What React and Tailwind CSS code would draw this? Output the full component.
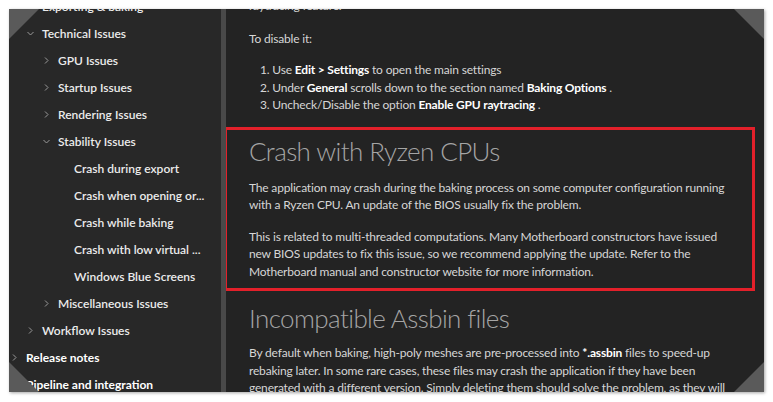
import React from "react";

const navItems = [
  { label: "Exporting & baking", level: 1, icon: "right" },
  { label: "Technical Issues", level: 1, icon: "down" },
  { label: "GPU Issues", level: 2, icon: "right" },
  { label: "Startup Issues", level: 2, icon: "right" },
  { label: "Rendering Issues", level: 2, icon: "right" },
  { label: "Stability Issues", level: 2, icon: "down" },
  { label: "Crash during export", level: 3, icon: "none" },
  { label: "Crash when opening or...", level: 3, icon: "none" },
  { label: "Crash while baking", level: 3, icon: "none" },
  { label: "Crash with low virtual ...", level: 3, icon: "none" },
  { label: "Windows Blue Screens", level: 3, icon: "none" },
  { label: "Miscellaneous Issues", level: 2, icon: "right" },
  { label: "Workflow Issues", level: 1, icon: "right" },
  { label: "Release notes", level: 0, icon: "right", bold: true },
  { label: "Pipeline and integration", level: 0, icon: "right", bold: true },
];

const indentClass = ["pl-[1px]", "pl-[17px]", "pl-[33px]", "pl-[49px]"];

const Chevron = ({ dir }) => {
  if (dir === "down") {
    return (
      <svg width="9" height="9" viewBox="0 0 9 9" className="shrink-0">
        <polyline points="1.5,3 4.5,6 7.5,3" fill="none" stroke="#9a9a9a" strokeWidth="1" />
      </svg>
    );
  }
  if (dir === "right") {
    return (
      <svg width="9" height="9" viewBox="0 0 9 9" className="shrink-0">
        <polyline points="3,1.5 6,4.5 3,7.5" fill="none" stroke="#9a9a9a" strokeWidth="1" />
      </svg>
    );
  }
  return <span className="w-[9px] shrink-0" />;
};

const NavRow = ({ item }) => (
  <div className={"flex h-[27px] items-center gap-[7px] whitespace-nowrap " + indentClass[item.level]}>
    <Chevron dir={item.icon} />
    <span className={item.bold ? "font-bold text-white" : "font-semibold text-[#ececec]"}>
      {item.label}
    </span>
  </div>
);

const Corner = ({ pos }) => {
  const cls = {
    tl: "left-0 top-0 [clip-path:polygon(0_0,100%_0,0_100%)]",
    tr: "right-0 top-0 [clip-path:polygon(0_0,100%_0,100%_100%)]",
    bl: "left-0 bottom-0 [clip-path:polygon(0_0,100%_100%,0_100%)]",
    br: "right-0 bottom-0 [clip-path:polygon(100%_0,100%_100%,0_100%)]",
  }[pos];
  return <div className={"absolute w-[30px] h-[30px] bg-[#5a5a5a] " + cls} />;
};

const B = ({ children }) => <b className="font-bold text-white">{children}</b>;

export default function App() {
  return (
    <div className="w-[773px] h-[402px] bg-white pt-[9px] pl-[9px] font-['Lato',sans-serif]">
      <div className="relative w-[755px] h-[383px] overflow-hidden flex bg-[#232323] shadow-[1px_1px_3px_rgba(0,0,0,0.35)]">
        {/* sidebar */}
        <div className="w-[212px] shrink-0 bg-[#282828] text-[12px] overflow-hidden">
          <div className="-mt-[16px]">
            {navItems.map((it) => (
              <NavRow key={it.label} item={it} />
            ))}
          </div>
        </div>
        <div className="w-[5px] shrink-0 bg-[#494949]" />

        {/* content */}
        <div className="flex-1 overflow-hidden text-[12px] leading-[17.5px] tracking-[-0.18px] text-[#d6d6d6]">
          <div className="-mt-[29.5px] pl-[23px]">
            <p>
              When a compatible GPU is available, the baking can be accelerated with the
              <br />
              raytracing feature.
            </p>
            <p className="mt-[15px]">To disable it:</p>
            <div className="mt-[14px] pl-[11px]">
              <div>1. Use <B>Edit &gt; Settings</B> to open the main settings</div>
              <div>2. Under <B>General</B> scrolls down to the section named <B>Baking Options</B> .</div>
              <div>3. Uncheck/Disable the option <B>Enable GPU raytracing</B> .</div>
            </div>
          </div>

          <div className="mt-[13px] -ml-[2px] mr-[9px] border-[3px] border-[#e3202a] pl-[22px] pt-[4px] pb-[8px]">
            <h2 className="text-[26px] leading-[34px] font-light text-[#a5a5a5] tracking-[-0.6px]">
              Crash with Ryzen CPUs
            </h2>
            <p className="mt-[11px]">
              The application may crash during the baking process on some computer configuration running
              <br />
              with a Ryzen CPU. An update of the BIOS usually fix the problem.
            </p>
            <p className="mt-[14px]">
              This is related to multi-threaded computations. Many Motherboard constructors have issued
              <br />
              new BIOS updates to fix this issue, so we recommend applying the update. Refer to the
              <br />
              Motherboard manual and constructor website for more information.
            </p>
          </div>

          <div className="pl-[23px]">
            <h2 className="mt-[10px] text-[26px] leading-[34px] font-light text-[#a5a5a5] tracking-[-0.6px]">
              Incompatible Assbin files
            </h2>
            <p className="mt-[9px]">
              By default when baking, high-poly meshes are pre-processed into <B>*.assbin</B> files to speed-up
              <br />
              rebaking later. In some rare cases, these files may crash the application if they have been
              <br />
              generated with a different version. Simply deleting them should solve the problem, as they will
            </p>
          </div>
        </div>

        <Corner pos="tl" />
        <Corner pos="tr" />
        <Corner pos="bl" />
        <Corner pos="br" />
      </div>
    </div>
  );
}
